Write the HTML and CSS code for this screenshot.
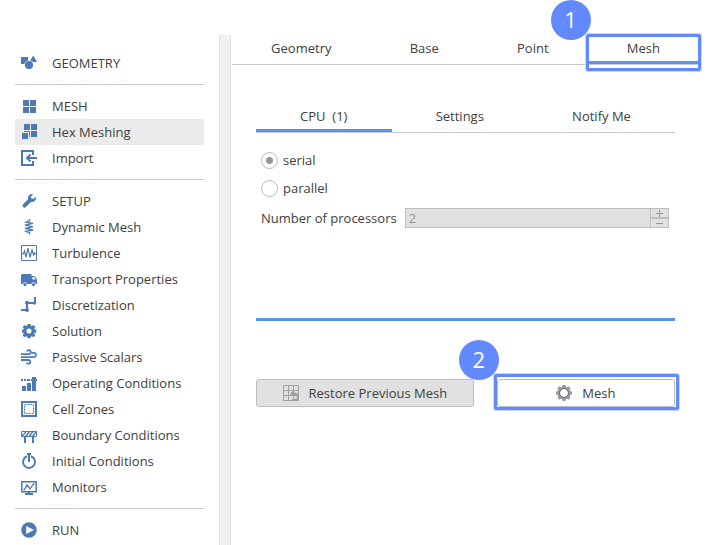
FILE: index.html
```html
<!DOCTYPE html>
<html lang="en">
<head>
<meta charset="utf-8">
<title>Mesh setup</title>
<link rel="stylesheet" href="styles.css">
</head>
<body>
<div class="app">
  <nav class="sidebar">
    <a class="item" href="#"><svg class="icon" viewBox="0 0 16 16"><path d="M0 2h7v3.400a5 5 0 0 0-3.800 3.600H0zM12.300.6L16 7h-3.600a5 5 0 0 0-3.300-1.500z"/><circle cx="8" cy="10" r="4.100"/></svg>GEOMETRY</a>
    <hr class="rule">
    <a class="item" href="#"><svg class="icon" viewBox="0 0 16 16"><path d="M2 2h6v6H2zM9 2h6v6H9zM2 9h6v6H2zM9 9h6v6H9z"/></svg>MESH</a>
    <a class="item item-active" href="#"><svg class="icon" viewBox="0 0 16 16"><path d="M3 0h6v6H3zM10 0h6v6h-6zM10 7h6v6h-6zM1 9h6v6H1zM3 7h6v6H8V8H3z"/></svg>Hex Meshing</a>
    <a class="item" href="#"><svg class="icon line" viewBox="0 0 16 16"><path stroke-width="2" d="M12 5V1H1v14h11v-4M6.500 8H16M9.500 4.500L6 8l3.500 3.500"/></svg>Import</a>
    <hr class="rule">
    <a class="item" href="#"><svg class="icon" viewBox="0 0 16 16"><path d="M14.700 3.700l-2.300 2.200-2-.5-.5-2L12.100 1.200a4 4 0 0 0-5 5L2.300 11a2 2 0 1 0 2.800 2.800L9.900 9a4 4 0 0 0 4.800-5.300z"/></svg>SETUP</a>
    <a class="item" href="#"><svg class="icon line" viewBox="0 0 16 16"><path stroke-width="1.300" d="M8.500 0v1.500L5 3.200l7 1.200-8 1.800 8 1.600-8 1.600 8 1.600-7 1.300 3.500 1.500V15.500"/></svg>Dynamic Mesh</a>
    <a class="item" href="#"><svg class="icon line" viewBox="0 0 16 16"><path d="M.5.5h15v15H.5z"/><path stroke-width="1.200" d="M1 9h1.500l1-3L5 12 7 3l2 9.500L11 5l1.500 5 1-2 .5 1h1"/></svg>Turbulence</a>
    <a class="item" href="#"><svg class="icon" viewBox="0 0 16 16"><path fill-rule="evenodd" d="M1 3h9.500v2h3L16 8.500V13h-1.300a2.300 2.300 0 0 0-4.400 0H6.200a2.300 2.300 0 0 0-4.400 0H0V4zM11.500 6v2.500h3L13 6z"/><circle cx="4" cy="13.600" r="1.600"/><circle cx="12.500" cy="13.600" r="1.600"/></svg>Transport Properties</a>
    <a class="item" href="#"><svg class="icon" viewBox="0 0 16 16"><path d="M0 12h5V5h8V0h2v7H7v7H0z"/><circle cx="6" cy="5.800" r="2"/><circle cx="13.500" cy="6" r="1.700"/><circle cx="6" cy="13" r="2"/></svg>Discretization</a>
    <a class="item" href="#"><svg class="icon" viewBox="0 0 16 16"><path fill-rule="evenodd" d="M6.500 1h3l.4 1.700 1 .4 1.600-1 1.800 1.800-1 1.600.4 1 1.600.3v2.600l-1.600.4-.4 1 1 1.600-1.800 1.800-1.600-1-1 .4-.4 1.600h-3l-.4-1.600-1-.4-1.600 1-1.800-1.800 1-1.600-.4-1L1 9.400V6.800l1.300-.3.4-1-1-1.600 1.800-1.800 1.600 1 1-.4zM8 5.500a2.500 2.500 0 1 0 0 5 2.500 2.500 0 0 0 0-5z"/></svg>Solution</a>
    <a class="item" href="#"><svg class="icon line" viewBox="0 0 16 16"><path stroke-width="1.800" d="M0 5.200h8a2 2 0 1 0-2-2.700M0 8.100h13a2.200 2.200 0 1 0-2-3.500M0 11h7.500a1.900 1.900 0 1 1-1.800 2.600"/></svg>Passive Scalars</a>
    <a class="item" href="#"><svg class="icon" viewBox="0 0 16 16"><path d="M1 11h4v5H1zM6 8h4v8H6zM11 2h4v2h1v2h-1v10h-4V6h-1V4h1zM0 4h2v2H0zM3 4h2v2H3zM6 4h3v2H6z"/></svg>Operating Conditions</a>
    <a class="item" href="#"><svg class="icon line" viewBox="0 0 16 16"><path stroke-width="2" d="M1 1h14v14H1z"/><path stroke-dasharray="2 1" d="M3.500 3.500h9v9h-9z"/></svg>Cell Zones</a>
    <a class="item" href="#"><svg class="icon line" viewBox="0 0 16 16"><path d="M.5 4.500h15v5H.5z"/><path stroke-width="1.500" d="M1 9l4-4M4.500 9.500l4-5M8 9.500l4-5M11.500 9.500l4-5"/><path stroke-width="2" d="M4 10v6M12 10v6"/></svg>Boundary Conditions</a>
    <a class="item" href="#"><svg class="icon line" viewBox="0 0 16 16"><path stroke-width="2" d="M6 3.300a6 6 0 1 0 4 0M6 1h4M8 1v8"/></svg>Initial Conditions</a>
    <a class="item" href="#"><svg class="icon line" viewBox="0 0 16 16"><path stroke-width="1.500" d="M.8 2.800h14.400v10H.8z"/><path stroke-width="1.300" d="M2.500 10.500h1L6 6l3 4 3.500-5h1"/><path stroke-width="2" d="M4 15h8M8 13v2"/></svg>Monitors</a>
    <hr class="rule">
    <a class="item" href="#"><svg class="icon" viewBox="0 0 16 16"><path fill-rule="evenodd" d="M8 .2a7.800 7.800 0 1 0 0 15.600A7.800 7.800 0 0 0 8 .2zM5.200 4v8L13 8z"/></svg>RUN</a>
  </nav>
  <div class="divider"></div>
  <main class="main">
    <div class="tabs" role="tablist">
      <button class="tab" role="tab">Geometry</button>
      <button class="tab" role="tab">Base</button>
      <button class="tab" role="tab">Point</button>
      <button class="tab tab-active marked" role="tab" aria-selected="true">Mesh<span class="badge badge-tab">1</span></button>
    </div>
    <section class="panel">
      <div class="tabs" role="tablist">
        <button class="tab tab-active" role="tab" aria-selected="true">CPU&nbsp; (1)</button>
        <button class="tab" role="tab">Settings</button>
        <button class="tab" role="tab">Notify Me</button>
      </div>
      <form class="form">
        <label class="option"><input class="radio" type="radio" name="mode" checked>serial</label>
        <label class="option"><input class="radio" type="radio" name="mode">parallel</label>
        <div class="field">
          <label for="processors">Number of processors</label>
          <div class="spinner">
            <input class="count" id="processors" type="text" value="2" disabled>
            <div class="steps">
              <button class="step" type="button" aria-label="Increase" disabled><svg class="sign" viewBox="0 0 7 7"><path d="M0 3.500h7M3.500 0v7"/></svg></button>
              <button class="step" type="button" aria-label="Decrease" disabled><svg class="sign" viewBox="0 0 7 7"><path d="M0 3.500h7"/></svg></button>
            </div>
          </div>
        </div>
      </form>
      <div class="actions">
        <button class="button button-off" disabled><svg class="icon" viewBox="0 0 16 16"><path fill="none" stroke="#a0a0a0" d="M.5.500h15v15H.5zM5.500 0v16M10.500 0v16M0 5.500h16M0 10.500h16"/><path fill="#a0a0a0" d="M7 8.500L11 5v2.500c3 0 5 1.500 5 4.500s-2 4-4 4H9v-2h3c1 0 2-.6 2-2s-1.300-2-3-2V12z"/></svg>Restore Previous Mesh</button>
        <button class="button marked"><svg class="icon" viewBox="0 0 16 16"><path fill="#9a9aa2" fill-rule="evenodd" d="M6.500 0h3l.4 1.700 1.200.5 1.500-.9 2.100 2.100-.9 1.500.5 1.200 1.700.4v3l-1.700.4-.5 1.200.9 1.500-2.100 2.100-1.500-.9-1.200.5-.4 1.700h-3l-.4-1.700-1.200-.5-1.500.9-2.100-2.100.9-1.500-.5-1.200L0 9.500v-3l1.700-.4.5-1.200-.9-1.500 2.100-2.100 1.500.9 1.200-.5zM8 4a4 4 0 1 0 0 8 4 4 0 0 0 0-8z"/><circle cx="8" cy="8" r="4.500" fill="none" stroke="#6c6c78"/></svg>Mesh<span class="badge badge-action">2</span></button>
      </div>
    </section>
  </main>
</div>
</body>
</html>
```
FILE: styles.css
```css
* {
  box-sizing: border-box;
}

body {
  margin: 0;
  background: #fff;
  color: #404040;
  font: 13px/26px "Open Sans", "Noto Sans", sans-serif;
}

button,
input {
  margin: 0;
  padding: 0;
  border: 0;
  background: none;
  color: inherit;
  font: inherit;
}

.app {
  display: flex;
  min-height: 100vh;
  padding-top: 35px;
}

.sidebar {
  flex: none;
  width: 219px;
  padding: 15px 15px 2px;
}

.item {
  display: flex;
  align-items: center;
  gap: 15px;
  padding-left: 6px;
  color: inherit;
  text-decoration: none;
}

.item-active {
  background: #ebebeb;
}

.icon {
  flex: none;
  width: 16px;
  height: 16px;
  fill: #4b7ab5;
}

.line {
  fill: none;
  stroke: #4b7ab5;
}

.rule {
  height: 1px;
  margin: 8px 0;
  border: 0;
  background: #c8c8c8;
}

.divider {
  flex: none;
  width: 12px;
  border: solid #e0e0e0;
  border-width: 0 1px;
  background: #f1f1f1;
}

.main {
  flex: 1;
  min-width: 0;
  padding: 0 22px 0 1px;
}

.tabs {
  display: flex;
  border-bottom: 1px solid #c8c8c8;
}

.tab {
  flex: 1 1 auto;
  height: 29px;
  border-bottom: 3px solid transparent;
}

.tab-active {
  border-bottom-color: #5b93f0;
}

.marked {
  position: relative;
}

.marked::before {
  content: "";
  position: absolute;
  border: 3px solid #6289ff;
  border-radius: 2px;
  box-shadow: 0 0 0 1px #c8d6ff;
}

.tab.marked::before {
  inset: -1px -2px -10px -2px;
}

.button.marked::before {
  inset: -6px -5px -4px -4px;
}

.badge {
  position: absolute;
  width: 40px;
  height: 40px;
  border-radius: 50%;
  background: #6289ff;
  color: #fff;
  font-size: 22px;
  line-height: 38px;
  text-align: center;
}

.badge-tab {
  top: -35px;
  left: -37px;
}

.badge-action {
  top: -40px;
  left: -39px;
}

.panel {
  padding: 38px 24px 0;
}

.form {
  height: 188px;
  padding: 13px 6px 0 5px;
  border-bottom: 3px solid #5b93f0;
}

.option {
  display: flex;
  align-items: center;
  gap: 5px;
  height: 28px;
}

.radio {
  appearance: none;
  width: 17px;
  height: 17px;
  border: 1px solid #b8b8b8;
  border-radius: 50%;
}

.radio:checked {
  background: radial-gradient(circle, #969696 3px, transparent 4px);
}

.field {
  display: flex;
  align-items: center;
  gap: 8px;
  height: 32px;
}

.spinner {
  display: flex;
  flex: 1;
  height: 20px;
  border: 1px solid #bebebe;
  background: #e1e1e1;
}

.count {
  flex: 1;
  min-width: 0;
  padding-left: 3px;
  color: #969696;
}

.steps {
  display: grid;
  gap: 2px;
  width: 18px;
  border-left: 1px solid #bebebe;
  background: #bebebe;
}

.step {
  display: grid;
  place-items: center;
  background: #e1e1e1;
}

.sign {
  width: 7px;
  height: 7px;
  stroke: #969696;
}

.actions {
  display: flex;
  gap: 23px;
  padding-top: 58px;
}

.button {
  display: flex;
  flex: 178 1 0;
  align-items: center;
  justify-content: center;
  gap: 10px;
  height: 28px;
  border: 1px solid #bebebe;
  border-radius: 3px;
}

.button-off {
  flex-grow: 218;
  background: #e1e1e1;
}
```
